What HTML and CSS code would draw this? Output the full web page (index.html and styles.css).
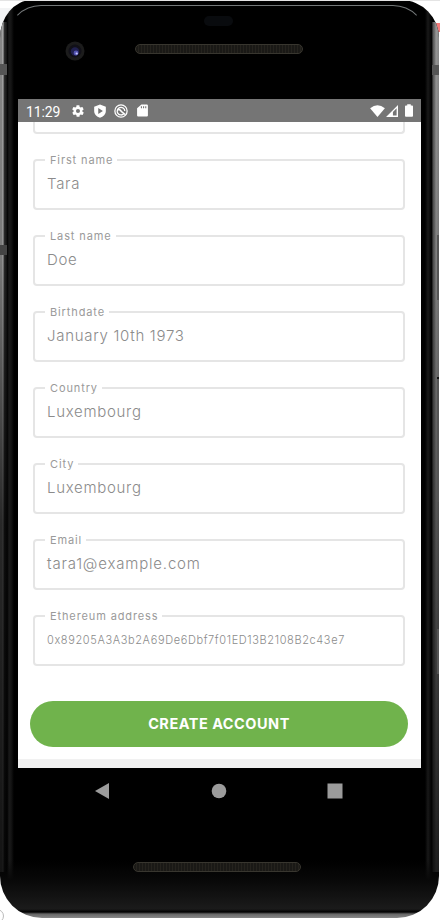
FILE: index.html
```
<!DOCTYPE html>
<html lang="en">
<head>
<meta charset="utf-8">
<title>Create account</title>
<link rel="stylesheet" href="styles.css">
</head>
<body>
<div class="backdrop">
  <i class="red-mark"></i><i class="corner-mark"></i>
  <div class="phone">
    <i class="rail rail-left"></i><i class="rail rail-right"></i>
    <i class="key key-power"></i><i class="key key-volume"></i><i class="key key-lower"></i>
    <div class="bezel-shine"></div>
    <header class="forehead">
      <i class="sensor"></i>
      <svg class="camera" viewBox="0 0 20 20"><circle cx="10" cy="10" r="9.5" fill="#1c1c1c"/><circle cx="10" cy="10" r="6.5" fill="#111018"/><circle cx="10" cy="10.5" r="4.2" fill="#20204f"/><circle cx="11" cy="12" r="2.4" fill="#5454b2"/><circle cx="11.7" cy="12.5" r="1.1" fill="#cacaff"/></svg>
      <i class="speaker"></i>
    </header>
    <main class="screen">
      <div class="status">
        <span class="time">11:29</span>
        <svg class="ico gear" viewBox="0 0 24 24"><path d="M19.4 13c0-.3.1-.6.1-1s0-.7-.1-1l2.1-1.6c.2-.2.2-.4.1-.6l-2-3.5c-.1-.2-.4-.3-.6-.2l-2.5 1c-.5-.4-1.1-.7-1.7-1l-.4-2.6c0-.3-.2-.5-.5-.5h-4c-.2 0-.5.2-.5.4l-.4 2.7c-.6.2-1.1.6-1.7 1l-2.5-1c-.2-.1-.5 0-.6.2l-2 3.5c-.1.2 0 .5.1.6L4.6 11c0 .3-.1.6-.1 1s0 .7.1 1l-2.1 1.6c-.2.2-.2.4-.1.6l2 3.5c.1.2.4.3.6.2l2.5-1c.5.4 1.1.7 1.7 1l.4 2.6c0 .3.3.5.5.5h4c.3 0 .5-.2.5-.4l.4-2.7c.6-.2 1.1-.6 1.7-1l2.5 1c.2.1.5 0 .6-.2l2-3.5c.1-.2.1-.5-.1-.6zM12 15.5a3.5 3.5 0 1 1 0-7 3.5 3.5 0 0 1 0 7z"/></svg>
        <svg class="ico shield" viewBox="0 0 24 24"><path fill-rule="evenodd" d="M12 1 2 4.5V12c0 5.500 4.200 9.600 10 11.500C17.800 21.600 22 17.500 22 12V4.500zM9 7l8 5-8 5z"/></svg>
        <svg class="ico ring" viewBox="0 0 24 24"><g fill="none" stroke="#fff"><circle cx="12" cy="12" r="10.5" stroke-width="2.2"/><path d="M17 16.5A6.5 6.5 0 1 1 18.5 12" stroke-width="2.2"/><path d="m7 10 3 0 3 3 6 5" stroke-width="2.6"/></g></svg>
        <svg class="ico card" viewBox="0 0 20 24"><path fill-rule="evenodd" d="M8 1h10q2 0 2 2v18q0 2-2 2H2q-2 0-2-2V8zM7 4v4h2V4zm4 0v4h2V4zm4 0v4h2V4z"/></svg>
        <span class="grow"></span>
        <svg class="wifi" viewBox="0 0 16 13"><path d="M0 3.5Q8-2.7 16 3.5L8 13z"/></svg>
        <svg class="cell" viewBox="0 0 13 13"><path fill-rule="evenodd" d="M13 0v13H0zM11.5 3.5 7.5 7.5v4h4z"/></svg>
        <svg class="battery" viewBox="0 0 9 14"><path d="M2.500 0h4v1.500H8q1 0 1 1V13q0 1-1 1H1q-1 0-1-1V2.500q0-1 1-1h1.500z"/></svg>
      </div>
      <form class="form">
        <div class="field field-cut"></div>
        <div class="field"><label>First name</label><span>Tara</span></div>
        <div class="field"><label>Last name</label><span>Doe</span></div>
        <div class="field"><label>Birthdate</label><span>January 10th 1973</span></div>
        <div class="field"><label>Country</label><span>Luxembourg</span></div>
        <div class="field"><label>City</label><span>Luxembourg</span></div>
        <div class="field"><label>Email</label><span class="email">tara1@example.com</span></div>
        <div class="field"><label>Ethereum address</label><span class="address">0x89205A3A3b2A69De6Dbf7f01ED13B2108B2c43e7</span></div>
        <button class="submit" type="button">CREATE ACCOUNT</button>
      </form>
      <div class="strip"></div>
    </main>
    <nav class="nav">
      <svg viewBox="0 0 16 16"><path d="M1 8 15 0v16z"/></svg>
      <svg viewBox="0 0 16 16"><circle cx="8" cy="8" r="7.3"/></svg>
      <svg viewBox="0 0 16 16"><path d="M.5.5h15v15H.5z"/></svg>
    </nav>
    <footer class="chin"><i class="speaker"></i></footer>
  </div>
</div>
</body>
</html>
```
FILE: styles.css
```
* { box-sizing: border-box; }
body { margin: 0; background: #fff; font-family: Inter, "Liberation Sans", sans-serif; }
i { display: block; }
.backdrop { position: relative; width: 440px; height: 920px; overflow: hidden; background: linear-gradient(#f3f4f5, #f3f4f5) 0 7px / 18px 30px no-repeat #fff; border-top: 1px solid #e4e4e4; }
.red-mark { position: absolute; right: 0; top: 22px; width: 5px; height: 9px; background: #f47b7b; }
.corner-mark { position: absolute; left: -10px; top: 908px; width: 14px; height: 14px; border: 1px solid #bbb; border-radius: 50%; }
.phone {
  position: relative; display: flex; flex-direction: column; width: 439px; height: 918px; margin-top: -1px; padding: 5px 18px 0;
  border-radius: 32px 38px 42px 42px / 38px 38px 42px 42px; overflow: hidden;
  background: linear-gradient(transparent 860px, #080808 880px, #1b1b1b 909px, #000 912px, #666 914px, #888 918px), linear-gradient(90deg, transparent 7px, #191919 9px, #151515 11px, #000 14px, #000 425px, #191919 428px, #050505 431px, transparent 433px), linear-gradient(#303334, #111 6px, #000 20px);
}
.bezel-shine { position: absolute; left: 7px; right: 12px; top: 5px; height: 80px; border: 1px solid transparent; border-top-color: #747879; border-radius: 34px 34px 0 0; }
.rail { position: absolute; top: 22px; height: 850px; }
.rail-left { left: 0; width: 7px; background: linear-gradient(transparent 42px, #555 42px 53px, transparent 53px 223px, #444 223px 233px, transparent 233px), linear-gradient(transparent, rgba(0,0,0,.1) 230px, rgba(0,0,0,.7) 500px, rgba(0,0,0,.85)), linear-gradient(90deg, #888 0 2px, #bbb 3px, #333 4px, #111 7px); }
.rail-right { right: 0; width: 7px; background: linear-gradient(transparent 43px, #555 43px 53px, transparent 53px), linear-gradient(transparent, rgba(0,0,0,.15) 230px, rgba(0,0,0,.5) 550px, rgba(0,0,0,.8)), linear-gradient(90deg, #111, #555 1px, #777 3px, #999 4px, #888 7px); }
.key { position: absolute; right: 0; width: 2px; background: #555; }
.key-power { top: 235px; height: 65px; }
.key-volume { top: 377px; height: 125px; border-top: 2px solid #111; }
.key-lower { top: 629px; height: 45px; }
.forehead { position: relative; height: 94px; flex: none; padding: 39px 0 0 117px; }
.sensor { position: absolute; left: 186px; top: 11px; width: 29px; height: 10px; border-radius: 5px; background: #090b0e; }
.camera { position: absolute; left: 47px; top: 36px; width: 20px; height: 20px; }
.speaker { width: 168px; height: 10px; border: 1px solid #38362f; border-radius: 5px; background: repeating-linear-gradient(90deg, #1a1916 0 2px, #25231e 2px 3px); }
.screen { position: relative; width: 403px; height: 669px; flex: none; background: #fff; display: flex; flex-direction: column; }
.status { height: 23px; flex: none; display: flex; align-items: center; padding: 0 8px; background: #757575; color: #fff; }
.status svg { fill: #fff; flex: none; }
.time { width: 45px; font: 14px/22px Roboto, sans-serif; letter-spacing: -.1px; padding-top: 2px; }
.ico { width: 14px; height: 14px; }
.shield, .ring { margin-left: 7.5px; }
.card { width: 11px; height: 13px; margin-left: 9px; }
.grow { flex: 1; }
.wifi { width: 15px; height: 12px; }
.cell { width: 12px; height: 12px; margin-left: 1px; }
.battery { width: 8px; height: 13px; margin-left: 7px; }
.form { flex: 1; display: flex; flex-direction: column; gap: 25px; padding: 0 12px 0 15px; }
.field { position: relative; width: 372px; height: 51px; flex: none; border: 2px solid #e5e5e5; border-radius: 4px; padding: 12px 0 0 12px; color: #8b8b8b; }
.field-cut { height: 12px; padding: 0; border-top: 0; border-radius: 0 0 4px 4px; }
.field label { position: absolute; left: 10px; top: -8px; padding: 0 4px 0 5px; background: #fff; color: #9a9a9a; font-size: 11px; letter-spacing: .88px; line-height: 14px; white-space: nowrap; }
.field span { display: block; font-size: 15px; letter-spacing: .7px; line-height: 22px; font-weight: 300; white-space: nowrap; }
.field .email { letter-spacing: .82px; }
.field .address { font-size: 11px; letter-spacing: .62px; }
.submit { width: 378px; height: 46px; flex: none; margin: 10px 0 0 -3px; padding: 0 0 2px; border: 0; border-radius: 23px; background: #70b34c; color: #fff; font: bold 14.5px Inter, sans-serif; letter-spacing: .5px; }
.strip { height: 9px; flex: none; background: #f1f1f1; }
.nav { display: flex; justify-content: space-between; height: 46px; flex: none; align-items: center; padding: 0 78px 0 76px; }
.nav svg { width: 16px; height: 16px; fill: #9b9b9b; }
.chin { padding: 48px 0 0 115px; }
```
